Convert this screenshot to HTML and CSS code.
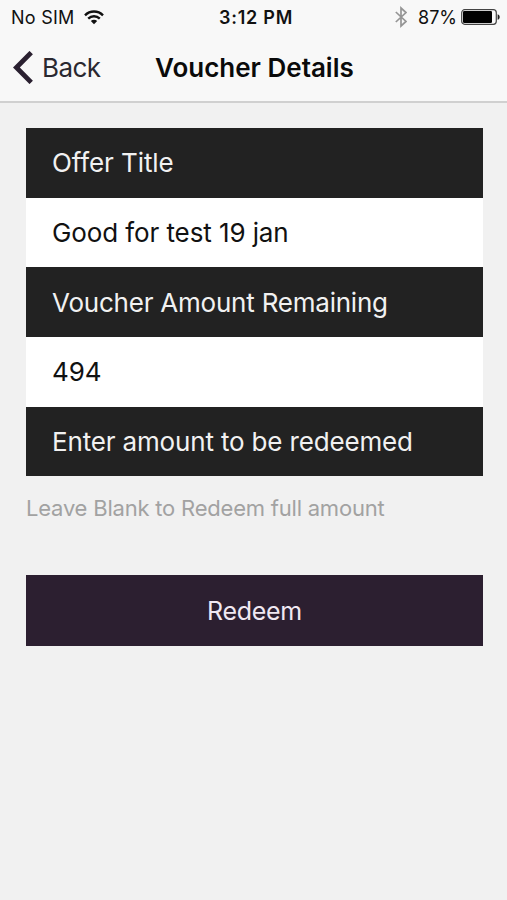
FILE: index.html
```html
<!DOCTYPE html>
<html lang="en">
<head>
<meta charset="utf-8">
<title>Voucher Details</title>
<link rel="stylesheet" href="styles.css">
</head>
<body>
<header class="header">
  <div class="status">
    <div class="status-left">
      <span class="carrier">No SIM</span>
      <svg class="wifi" width="20" height="15" viewBox="0 0 20 15" fill="none" stroke="#111" stroke-width="2.4">
        <path d="M1 5.3C6 .3 14 .3 19 5.3"/>
        <path d="M4.2 8.7C7.5 5.5 12.5 5.5 15.8 8.7"/>
        <path d="M10 14.2 6.8 11C8.7 9.3 11.3 9.3 13.2 11Z" fill="#111" stroke="none"/>
      </svg>
    </div>
    <span class="time">3:12 PM</span>
    <div class="status-right">
      <svg class="bluetooth" width="12" height="22" viewBox="0 0 12 22" fill="none" stroke="#959595" stroke-width="1.7">
        <path d="M.8 6 11 15.5 6 20V2L11 6.5 .8 16"/>
      </svg>
      <span class="percent">87%</span>
      <svg class="battery" width="39" height="16" viewBox="0 0 39 16">
        <rect x=".7" y=".7" width="34.6" height="14.6" rx="3" fill="#fafafa" stroke="#444" stroke-width="1.2"/>
        <rect x="2" y="2" width="29" height="12" rx="1.3" fill="#000"/>
        <path d="M36.6 5.2C39.4 5.8 39.4 10.2 36.6 10.8Z" fill="#222"/>
      </svg>
    </div>
  </div>
  <nav class="nav">
    <a class="back">
      <svg class="chevron" width="20" height="33" viewBox="0 0 20 33" fill="none" stroke="#2a2030" stroke-width="4.8">
        <path d="M18.2 1.6 3.4 16.5 18.2 31.4"/>
      </svg>
      <span class="back-label">Back</span>
    </a>
    <h1 class="title">Voucher Details</h1>
  </nav>
</header>
<main class="content">
  <section class="rows">
    <div class="row dark"><span class="offer-label">Offer Title</span></div>
    <div class="row"><span class="offer-value">Good for test 19 jan</span></div>
    <div class="row dark"><span class="remaining-label">Voucher Amount Remaining</span></div>
    <div class="row"><span class="remaining-value">494</span></div>
    <div class="row dark"><span class="enter-label">Enter amount to be redeemed</span></div>
  </section>
  <input class="amount" type="text" placeholder="Leave Blank to Redeem full amount" aria-label="Amount">
  <button class="redeem" type="button"><span class="redeem-label">Redeem</span></button>
</main>
</body>
</html>
```

FILE: styles.css
```css
* { box-sizing: border-box; }
body {
  margin: 0;
  min-height: 900px;
  background: #f1f1f1;
  font-family: Inter, "Liberation Sans", sans-serif;
  color: #111;
}
.header {
  height: 103px;
  background: #f8f8f8;
  border-bottom: 2px solid #d0d0d0;
}
.status {
  display: grid;
  grid-template-columns: 1fr auto 1fr;
  align-items: center;
  height: 34px;
  padding: 0 7px 0 11px;
  font-size: 18px;
  white-space: nowrap;
}
.status-left, .status-right { display: flex; align-items: center; }
.status-right { justify-content: flex-end; }
.carrier { letter-spacing: 0.25px; }
.wifi { margin-left: 9px; }
.time { font-weight: 600; margin-left: 1px; letter-spacing: 0.75px; }
.percent { margin: 0 4px 0 11px; }
.nav {
  display: grid;
  grid-template-columns: 142px 1fr;
  align-items: center;
  height: 66px;
  padding-left: 13px;
}
.back { display: flex; align-items: center; color: #2a2830; }
.back-label { margin-left: 9px; font-size: 26px; letter-spacing: -0.6px; }
.title { margin: 0; font-size: 26px; font-weight: 600; letter-spacing: 0; color: #0a0a0a; white-space: nowrap; }
.content { padding: 25px 24px 0 26px; }
.row {
  display: flex;
  align-items: center;
  height: 69.7px;
  padding-left: 26px;
  background: #fff;
  font-size: 26px;
  letter-spacing: -0.1px;
  white-space: nowrap;
}
.dark { background: #222; color: #f1f1f1; }
.remaining-label { letter-spacing: -0.22px; }
.enter-label { letter-spacing: -0.16px; }
.amount {
  display: block;
  width: 100%;
  height: 64px;
  padding: 0;
  border: 0;
  background: transparent;
  font: 22px Inter, "Liberation Sans", sans-serif;
  letter-spacing: -0.21px;
}
.amount::placeholder { color: #a2a2a2; opacity: 1; }
.redeem {
  display: block;
  width: 100%;
  height: 71px;
  margin-top: 35px;
  padding: 0;
  border: 0;
  background: #2c1f30;
  color: #f0e8f2;
  font: 25px Inter, "Liberation Sans", sans-serif;
  letter-spacing: -0.3px;
}
```
